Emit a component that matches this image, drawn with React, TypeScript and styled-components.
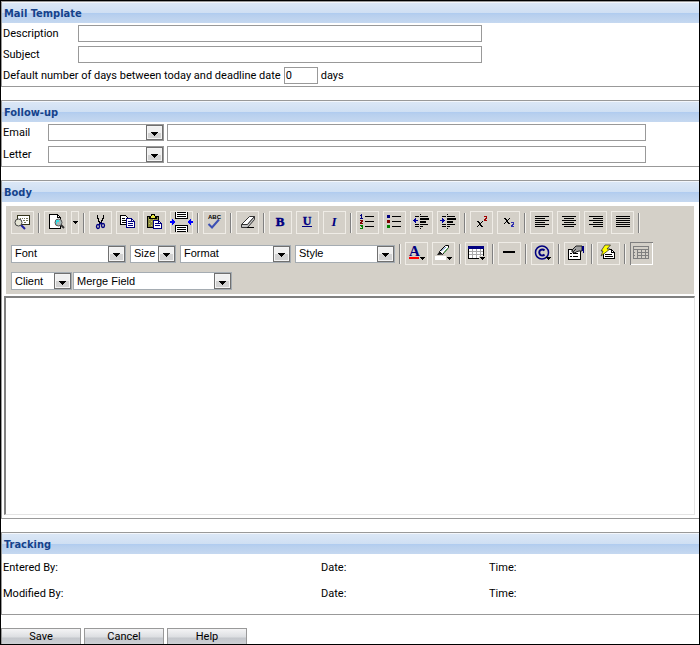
import React from "react";
import styled, { createGlobalStyle, css } from "styled-components";

const GlobalStyle = createGlobalStyle`
  *, *::before, *::after { box-sizing: border-box; }
  body {
    margin: 0;
    background: #fff;
    color: #000;
    font: 11px/15px Roboto, Tahoma, sans-serif;
  }
  button, input, select, textarea { font: inherit; color: inherit; margin: 0; }
`;

const Frame = styled.main`
  display: flex;
  flex-direction: column;
  gap: 13px;
  min-height: 100vh;
  border: 1px solid #000;
`;

const Panel = styled.section`
  border: 1px solid #999;
  border-right: 0;
`;

const PanelTitle = styled.h2`
  margin: 0;
  padding: 0 2px;
  height: 21px;
  border-top: 1px solid #f4f7fc;
  font-family: "DejaVu Sans Condensed", Tahoma, sans-serif;
  font-size: 11px;
  font-weight: bold;
  line-height: 21px;
  color: #15428b;
  background: linear-gradient(#dbe7f6 0, #cfdff3 10px, #aecbf0 10px, #b7cfee 12px, #c5d8f0 100%);
`;

const FieldRow = styled.div<{ $tall?: boolean }>`
  display: flex;
  align-items: flex-start;
  gap: 3px;
  padding: 2px 1px ${(p) => (p.$tall ? 3 : 2)}px;
`;

const FieldLabel = styled.label<{ $width?: number }>`
  flex: none;
  line-height: 17px;
  ${(p) => p.$width && css`width: ${p.$width}px;`}
`;

const TextInput = styled.input<{ $basis: number }>`
  flex: 0 1 ${(p) => p.$basis}px;
  min-width: 0;
  height: 17px;
  padding: 0 1px;
  border: 1px solid #999;
  border-radius: 0;
  background: #fff;
`;

const SelectBox = styled.span<{ $width: number; $toolbar?: boolean }>`
  display: grid;
  flex: none;
  grid-template-columns: 1fr 18px;
  grid-template-rows: 100%;
  width: ${(p) => p.$width}px;
  height: ${(p) => (p.$toolbar ? 18 : 17)}px;
  ${(p) => p.$toolbar && css`font-family: Arial, "Liberation Sans", sans-serif;`}
`;

const NativeSelect = styled.select<{ $toolbar?: boolean }>`
  grid-area: 1 / 1 / 2 / 3;
  min-width: 0;
  appearance: none;
  padding: 0 17px 0 3px;
  border: 1px solid ${(p) => (p.$toolbar ? "#a5acb2" : "#999")};
  border-radius: 0;
  background: #fff;
`;

const DropArrow = styled.span`
  grid-area: 1 / 2 / 2 / 3;
  display: flex;
  align-items: center;
  justify-content: center;
  margin: 1px 1px 1px 0;
  padding-top: 3px;
  border: 1px solid #707070;
  box-shadow: inset 0 0 0 1px #f4f4f4;
  background: linear-gradient(#f0f0f0 50%, #d2d2d2 50%);
  pointer-events: none;
`;

const EditorBody = styled.div`
  padding: 4px 4px 3px 2px;
`;

const Toolbar = styled.div`
  margin: 0 1px 2px 2px;
  padding: 5px 5px 4px;
  background: #d4d0c8;
`;

const ToolRow = styled.div<{ $gap?: number }>`
  display: flex;
  align-items: center;
  gap: ${(p) => p.$gap ?? 4}px;
  & + & { margin-top: 8px; }
  & + & + & { margin-top: 7px; }
`;

const ToolButton = styled.button<{ $narrow?: boolean; $sunken?: boolean }>`
  display: flex;
  flex: none;
  align-items: center;
  justify-content: center;
  width: ${(p) => (p.$narrow ? 8 : 23)}px;
  height: 23px;
  padding: 0;
  border: 0;
  background: transparent;
  box-shadow: inset 0 0 0 1px #efece6;
  ${(p) => p.$sunken && css`box-shadow: inset 1px 1px #808080, inset -1px -1px #fff;`}
  svg { display: block; flex: none; }
`;

const Separator = styled.span`
  flex: none;
  width: 2px;
  height: 20px;
  border-left: 1px solid #808080;
  border-right: 1px solid #f4f2ee;
`;

const EditorArea = styled.textarea`
  display: block;
  width: 100%;
  height: 219px;
  padding: 4px;
  border: 2px solid;
  border-color: #808080 #e4e4e4 #e4e4e4 #808080;
  border-right-width: 1px;
  border-bottom-width: 1px;
  border-radius: 0;
  resize: none;
  outline: 0;
  background: #fff;
`;

const TrackingGrid = styled.div`
  display: grid;
  grid-template-columns: 318fr 168fr 209fr;
  grid-auto-rows: 26px;
  align-items: center;
  padding: 0 1px 8px;
`;

const Actions = styled.div`
  display: flex;
  gap: 3px;
`;

const ActionButton = styled.button`
  width: 80px;
  height: 16px;
  padding: 0;
  border: 1px solid #999;
  border-bottom: 0;
  border-radius: 0;
  line-height: 15px;
  background: linear-gradient(#f4f4f5 0, #dcdee1 8px, #c4c7cc 9px, #cdd0d4 100%);
`;

const Down = () => (
  <svg width="7" height="4" viewBox="0 0 7 4" shapeRendering="crispEdges" aria-hidden="true">
    <path d="M0 0h7v1H6v1H5v1H4v1H3V3H2V2H1V1H0z" />
  </svg>
);

type SelectProps = { label: string; width: number; options?: string[]; toolbar?: boolean; id?: string };

const Select = ({ label, width, options = [""], toolbar, id }: SelectProps) => (
  <SelectBox $width={width} $toolbar={toolbar}>
    <NativeSelect id={id} aria-label={label} $toolbar={toolbar}>
      {options.map((o) => <option key={o}>{o}</option>)}
    </NativeSelect>
    <DropArrow><Down /></DropArrow>
  </SelectBox>
);

const NAVY = "#000080";
const SmallArrow = <path d="M15 15h5v1h-1v1h-1v1h-1v-1h-1v-1h-1z" />;

const lines = (rows: [number, number, number][]) =>
  rows.map(([x, y, w]) => <rect key={`${x}-${y}`} x={x} y={y} width={w} height="1" />);

const alignLines = (kind: string) =>
  lines([0, 1, 2, 3, 4, 5].map((i) => {
    const w = kind === "justify" || i % 2 === 0 ? 14 : 10;
    const x = kind === "right" ? 19 - w : kind === "center" ? 5 + (14 - w) / 2 : 5;
    return [x, 5 + i * 2, w] as [number, number, number];
  }));

const indentBase = (
  <>
    {lines([[5, 5, 4], [10, 5, 8], [10, 7, 9], [10, 8, 9], [10, 10, 6], [10, 11, 6], [5, 13, 4], [10, 13, 8], [5, 15, 4], [10, 15, 3]])}
    <path d="M10 3h1v1h-1zM10 17h1v1h-1z" />
  </>
);

const art: Record<string, React.ReactNode> = {
  find: (
    <>
      <path d="M6.500 4.500h12v9h-12z" fill="#fff" stroke="#33331a" />
      <path d="M9 7h1v1H9zM11 7h1v1h-1zM13 7h1v1h-1zM15 7h2v1h-2zM12 9h2v1h-2zM15 9h2v1h-2zM13 11h2v1h-2z" fill="#77775a" />
      <path d="M10 14l4 4" stroke="#2020a0" strokeWidth="2" shapeRendering="auto" />
      <circle cx="7.500" cy="11.500" r="3.500" fill="#e4e4d4" stroke="#444" shapeRendering="auto" />
    </>
  ),
  preview: (
    <>
      <path d="M5.500 3.500h8l3 3v11h-11z" fill="#fff" stroke="#000" />
      <path d="M13.500 3.500v3h3" fill="none" stroke="#000" />
      <circle cx="14.500" cy="11.500" r="3.500" fill="#a8b8b8" stroke="#555" shapeRendering="auto" />
      <path d="M12 9h3v2h-2v2h-1z" fill="#30e0e8" />
      <path d="M17 14l3 3" stroke="#333" strokeWidth="2" shapeRendering="auto" />
    </>
  ),
  cut: (
    <>
      <path d="M8 4h1v3h1v3h1v2h1v1h-2v-2H9V8H8zM14 4h1v4h-1v2h-1v2h-1v1h-1v-2h1V9h1V7h1z" />
      <g fill="none" stroke={NAVY} strokeWidth="1.300" shapeRendering="auto">
        <ellipse cx="9" cy="15.500" rx="1.500" ry="2" />
        <ellipse cx="14" cy="14.500" rx="1.500" ry="2" />
        <path d="M10 14l2-2 1 1" />
      </g>
    </>
  ),
  copy: (
    <>
      <path d="M4.500 4.500h5l2 2v7h-7z" fill="#fff" stroke="#000" />
      <path d="M6 7h3v1H6zM6 9h4v1H6zM6 11h4v1H6z" />
      <path d="M10.500 7.500h5l3 3v6h-8z" fill="#fff" stroke={NAVY} />
      <path d="M12 10h3v1h-3zM12 12h5v1h-5zM12 14h5v1h-5zM15 8h1v2h2v1h-3z" fill={NAVY} />
    </>
  ),
  paste: (
    <>
      <path d="M4.500 5.500h11v11h-11z" fill="#8c8c40" stroke="#000" />
      <path d="M6 8h1v1H6zM8 10h1v1H8zM6 12h1v1H6zM8 14h1v1H8zM10 8h1v1h-1z" fill="#c8c870" />
      <path d="M6 5h2V3h4v2h2v3H6z" />
      <path d="M8 5h1V4h2v1h1v2H8z" fill="#e8e840" />
      <path d="M10.500 9.500h5l3 3v5h-8z" fill="#fff" stroke={NAVY} />
      <path d="M12 12h3v1h-3zM12 14h5v1h-5zM15 10h1v2h2v1h-3z" fill={NAVY} />
    </>
  ),
  pageBreak: (
    <>
      <path d="M5 1h13v7H5zM5 14h13v7H5z" />
      <path d="M6 1h11v6H6zM6 15h11v6H6z" fill="#fff" />
      {lines([[7, 1, 9], [7, 3, 9], [7, 5, 9], [7, 16, 9], [7, 18, 9], [7, 20, 9]])}
      <path d="M0 10h2V8h1v1h1v1h1v2H4v1H3v1H2v-2H0zM23 10h-2V8h-1v1h-1v1h-1v2h1v1h1v1h1v-2h2z" fill="#00f" />
    </>
  ),
  spell: (
    <>
      <text x="5" y="8" fontSize="6" fontWeight="bold" fontFamily="Liberation Sans, sans-serif">ABC</text>
      <path d="M5.500 13l3.500 3.500 7-8" fill="none" stroke="#3c50b4" strokeWidth="2" shapeRendering="auto" />
    </>
  ),
  eraser: (
    <g shapeRendering="auto" stroke="#333" strokeLinejoin="round">
      <path d="M5.500 13.500l8-8h5l-7 8v3h-5z" fill="#fff" />
      <path d="M5.500 13.500h6l7-8v3l-7 8h-6z" fill="#c4c4c4" />
      <path d="M11 16.500h7" stroke="#000" />
    </g>
  ),
  bold: <text x="11" y="15" textAnchor="middle" fontSize="13" fontWeight="bold" fill={NAVY} stroke={NAVY} strokeWidth="0.500">B</text>,
  underline: (
    <>
      <text x="11" y="14" textAnchor="middle" fontSize="12" fontWeight="bold" fill={NAVY} stroke={NAVY} strokeWidth="0.300">U</text>
      <path d="M6 15h10v1H6z" fill={NAVY} />
    </>
  ),
  italic: <text x="11" y="15" textAnchor="middle" fontSize="13" fontWeight="bold" fontStyle="italic" fill={NAVY}>I</text>,
  numbers: (
    <>
      {lines([[9, 5, 9], [9, 10, 9], [9, 15, 9]])}
      <path d="M5 3h1v4h1v1H4V7h1V5H4V4h1z" fill={NAVY} />
      <path d="M4 9h3v2H6v1h1v1H4v-2h1v-1H4z" fill="#800000" />
      <path d="M4 14h3v4H4v-1h2v-1H5v-1H4z" fill="#008000" />
    </>
  ),
  bullets: (
    <>
      {lines([[9, 5, 9], [9, 10, 9], [9, 15, 9]])}
      <path d="M4 4h3v3H4z" fill={NAVY} />
      <path d="M4 9h3v3H4z" fill="#800000" />
      <path d="M4 14h3v3H4z" fill="#008000" />
    </>
  ),
  outdent: <>{indentBase}<path d="M3 9h1V8h1V7h1v2h2v1H6v2H5v-1H4v-1H3z" fill="#0000a0" /></>,
  indent: <>{indentBase}<path d="M3 9h2V7h1v1h1v1h1v1H7v1H6v1H5v-2H3z" fill="#0000a0" /></>,
  superscript: (
    <>
      <path d="M7 10h2v1h1v1h1v-1h1v-1h1v1h-1v1h-1v2h1v1h1v1h-2v-1h-1v-1H9v1H8v1H7v-1h1v-1h1v-2H8v-1H7z" />
      <path d="M14 5h3v3h-1v1h1v1h-3V8h1V7h1V6h-2z" fill="#a00000" />
    </>
  ),
  subscript: (
    <>
      <path d="M7 7h2v1h1v1h1V8h1V7h1v1h-1v1h-1v2h1v1h1v1h-2v-1h-1v-1H9v1H8v1H7v-1h1v-1h1V9H8V8H7z" />
      <path d="M14 11h3v3h-1v1h1v1h-3v-2h1v-1h1v-1h-2z" fill="#3030b0" />
    </>
  ),
  left: alignLines("left"),
  center: alignLines("center"),
  right: alignLines("right"),
  justify: alignLines("justify"),
  color: (
    <>
      <text x="9.500" y="14" textAnchor="middle" fontSize="15" fontWeight="bold" fill={NAVY}>A</text>
      <path d="M4 15h10v2H4z" fill="#f00" />
      {SmallArrow}
    </>
  ),
  highlight: (
    <>
      <path d="M3 14h11v4H3z" fill="#fff" />
      <g shapeRendering="auto">
        <path d="M7.500 9.500l6-6h3v2l-6 7z" fill="#fff" stroke="#000" />
        <path d="M9 9l5-4" stroke="#68b" />
        <path d="M12 11l4-5" stroke="#4a4" />
        <path d="M5 13l2.500-3.500 3 3z" fill="#111" />
      </g>
      {SmallArrow}
    </>
  ),
  table: (
    <>
      <path d="M3 4h16v13H3z" />
      <path d="M4 7h14v9H4z" fill="#fff" />
      <path d="M3 4h16v3H3z" fill={NAVY} />
      <path d="M7 7h1v9H7zM11 7h1v9h-1zM15 7h1v9h-1zM4 9h14v1H4zM4 12h14v1H4z" fill="#aaa" />
      <path d="M14 14h7v4h-7z" fill="#d4d0c8" />
      {SmallArrow}
    </>
  ),
  rule: <path d="M5 9h12v2H5z" />,
  symbol: (
    <>
      <g fill="none" stroke={NAVY} shapeRendering="auto">
        <circle cx="11" cy="10.500" r="6.500" strokeWidth="1.500" />
        <path d="M13.500 8.500a3 3 0 1 0 0 4" strokeWidth="2" />
      </g>
      {SmallArrow}
    </>
  ),
  properties: (
    <>
      <path d="M4.500 7.500h12v10h-12z" fill="#fff" stroke="#000" />
      <path d="M6 11h2v1H6zM9 11h5v1H9zM6 14h2v1H6zM9 14h5v1H9z" />
      <path d="M8 8l4-4h6v5h-3l-3 1-1 1-3-1z" fill="#a0a0a0" stroke="#222" shapeRendering="auto" />
      <path d="M8 8h1v1H8zM10 8h1v1h-1zM9 9h1v1H9zM11 7h1v1h-1z" fill="#222" />
      <path d="M18 4h2v7h-1V9h-1z" fill={NAVY} />
    </>
  ),
  template: (
    <>
      <path d="M6.500 7.500h8l3 3v6h-11z" fill="#fff" stroke="#000" />
      <path d="M8 12h7v1H8zM8 14h8v1H8zM14 8h1v2h2v1h-3z" />
      <path d="M8 3h5.500L10 7h3l-9 7 2-5H4z" fill="#ff0" stroke="#222" strokeWidth="0.700" shapeRendering="auto" />
    </>
  ),
  grid: (
    <path
      d="M3.500 4.500h15v12h-15zM3 7.500h16M7.500 7v10M11.500 7v10M15.500 7v10M7 10.500h12M7 13.500h12M4 10.500h1M4 13.500h1"
      fill="none"
      stroke="#808080"
    />
  ),
};

const Tool = ({ icon, label, sunken }: { icon: string; label: string; sunken?: boolean }) => (
  <ToolButton type="button" aria-label={label} title={label} $sunken={sunken}>
    <svg width="23" height="23" viewBox="0 0 23 23" shapeRendering="crispEdges" fontFamily="Liberation Serif, serif" aria-hidden="true">
      {art[icon]}
    </svg>
  </ToolButton>
);

export default function App() {
  return (
    <>
      <GlobalStyle />
      <Frame>
        <Panel>
          <PanelTitle>Mail Template</PanelTitle>
          <FieldRow>
            <FieldLabel htmlFor="description" $width={72}>Description</FieldLabel>
            <TextInput id="description" $basis={404} />
          </FieldRow>
          <FieldRow>
            <FieldLabel htmlFor="subject" $width={72}>Subject</FieldLabel>
            <TextInput id="subject" $basis={404} />
          </FieldRow>
          <FieldRow>
            <FieldLabel htmlFor="days">Default number of days between today and deadline date</FieldLabel>
            <TextInput id="days" $basis={34} defaultValue="0" />
            <FieldLabel htmlFor="days">days</FieldLabel>
          </FieldRow>
        </Panel>

        <Panel>
          <PanelTitle>Follow-up</PanelTitle>
          <FieldRow $tall>
            <FieldLabel htmlFor="email" $width={42}>Email</FieldLabel>
            <Select id="email" label="Email" width={116} />
            <TextInput aria-label="Email text" $basis={479} />
          </FieldRow>
          <FieldRow $tall>
            <FieldLabel htmlFor="letter" $width={42}>Letter</FieldLabel>
            <Select id="letter" label="Letter" width={116} />
            <TextInput aria-label="Letter text" $basis={479} />
          </FieldRow>
        </Panel>

        <Panel>
          <PanelTitle>Body</PanelTitle>
          <EditorBody>
            <Toolbar role="toolbar" aria-label="Formatting">
              <ToolRow>
                <Tool icon="find" label="Find" />
                <Separator />
                <Tool icon="preview" label="Preview" />
                <ToolButton type="button" aria-label="Preview options" $narrow>
                  <svg width="5" height="3" viewBox="0 0 5 3" shapeRendering="crispEdges"><path d="M0 0h5v1H4v1H3v1H2V2H1V1H0z" /></svg>
                </ToolButton>
                <Separator />
                <Tool icon="cut" label="Cut" />
                <Tool icon="copy" label="Copy" />
                <Tool icon="paste" label="Paste" />
                <Tool icon="pageBreak" label="Page break" />
                <Separator />
                <Tool icon="spell" label="Check spelling" />
                <Separator />
                <Tool icon="eraser" label="Clear formatting" />
                <Separator />
                <Tool icon="bold" label="Bold" />
                <Tool icon="underline" label="Underline" />
                <Tool icon="italic" label="Italic" />
                <Separator />
                <Tool icon="numbers" label="Numbered list" />
                <Tool icon="bullets" label="Bulleted list" />
                <Tool icon="outdent" label="Decrease indent" />
                <Tool icon="indent" label="Increase indent" />
                <Separator />
                <Tool icon="superscript" label="Superscript" />
                <Tool icon="subscript" label="Subscript" />
                <Separator />
                <Tool icon="left" label="Align left" />
                <Tool icon="center" label="Align center" />
                <Tool icon="right" label="Align right" />
                <Tool icon="justify" label="Justify" />
                <Separator />
              </ToolRow>
              <ToolRow>
                <Select toolbar label="Font" width={115} options={["Font"]} />
                <Select toolbar label="Size" width={46} options={["Size"]} />
                <Select toolbar label="Format" width={111} options={["Format"]} />
                <Select toolbar label="Style" width={100} options={["Style"]} />
                <Separator />
                <Tool icon="color" label="Text color" />
                <Tool icon="highlight" label="Highlight" />
                <Separator />
                <Tool icon="table" label="Insert table" />
                <Separator />
                <Tool icon="rule" label="Horizontal rule" />
                <Separator />
                <Tool icon="symbol" label="Insert symbol" />
                <Separator />
                <Tool icon="properties" label="Properties" />
                <Separator />
                <Tool icon="template" label="Insert template" />
                <Separator />
                <Tool icon="grid" label="Show table borders" sunken />
              </ToolRow>
              <ToolRow $gap={1}>
                <Select toolbar label="Client" width={61} options={["Client"]} />
                <Select toolbar label="Merge Field" width={159} options={["Merge Field"]} />
              </ToolRow>
            </Toolbar>
            <EditorArea aria-label="Body" />
          </EditorBody>
        </Panel>

        <Panel>
          <PanelTitle>Tracking</PanelTitle>
          <TrackingGrid>
            <span>Entered By:</span>
            <span>Date:</span>
            <span>Time:</span>
            <span>Modified By:</span>
            <span>Date:</span>
            <span>Time:</span>
          </TrackingGrid>
        </Panel>

        <Actions>
          <ActionButton type="submit">Save</ActionButton>
          <ActionButton type="button">Cancel</ActionButton>
          <ActionButton type="button">Help</ActionButton>
        </Actions>
      </Frame>
    </>
  );
}
